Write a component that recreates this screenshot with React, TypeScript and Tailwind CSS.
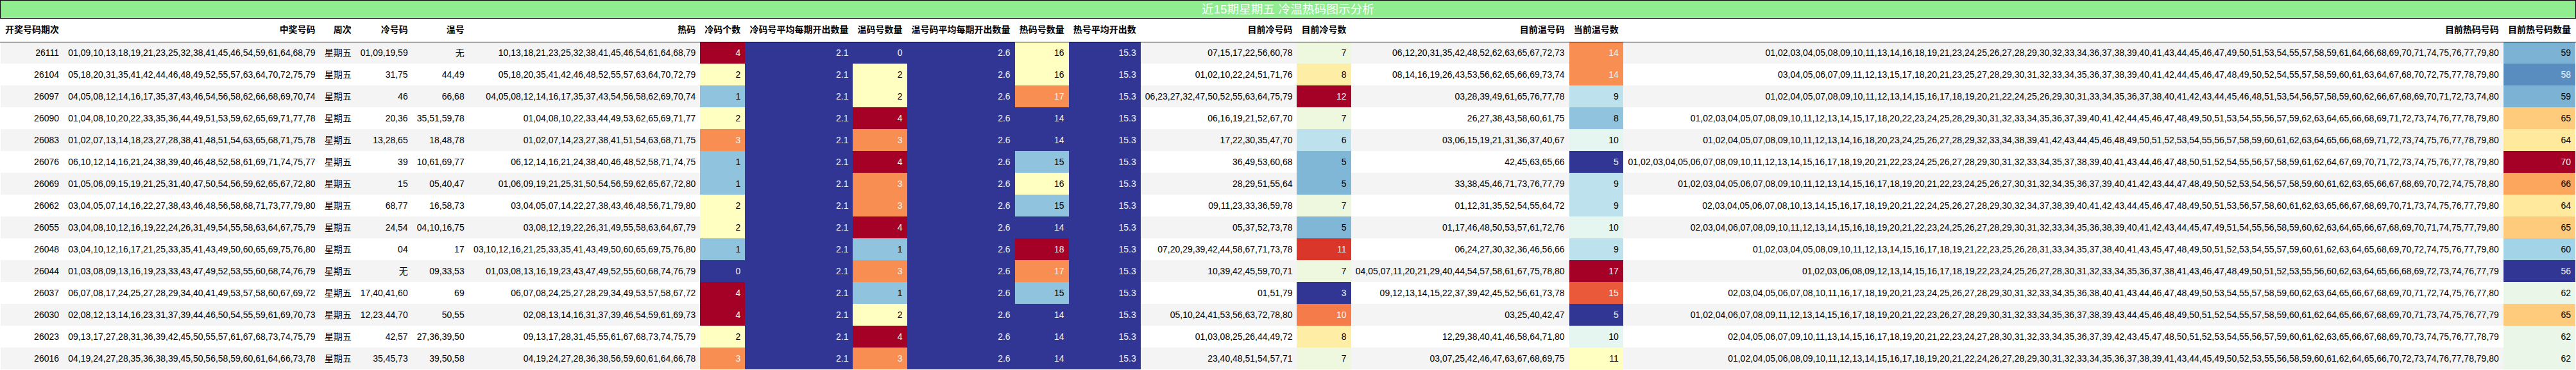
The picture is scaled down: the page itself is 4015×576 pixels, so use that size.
const HEADERS = [
  "开奖号码期次",
  "中奖号码",
  "周次",
  "冷号码",
  "温号",
  "热码",
  "冷码个数",
  "冷码号平均每期开出数量",
  "温码号数量",
  "温号码平均每期开出数量",
  "热码号数量",
  "热号平均开出数",
  "目前冷号码",
  "目前冷号数",
  "目前温号码",
  "当前温号数",
  "目前热码号码",
  "目前热号码数量",
];

// id, winning, cold, hot, current cold, current warm. Warm and current hot are derived.
const DRAWS: [string, string, string, string, string, string][] = [
  ["26111", "01,09,10,13,18,19,21,23,25,32,38,41,45,46,54,59,61,64,68,79", "01,09,19,59", "10,13,18,21,23,25,32,38,41,45,46,54,61,64,68,79", "07,15,17,22,56,60,78", "06,12,20,31,35,42,48,52,62,63,65,67,72,73"],
  ["26104", "05,18,20,31,35,41,42,44,46,48,49,52,55,57,63,64,70,72,75,79", "31,75", "05,18,20,35,41,42,46,48,52,55,57,63,64,70,72,79", "01,02,10,22,24,51,71,76", "08,14,16,19,26,43,53,56,62,65,66,69,73,74"],
  ["26097", "04,05,08,12,14,16,17,35,37,43,46,54,56,58,62,66,68,69,70,74", "46", "04,05,08,12,14,16,17,35,37,43,54,56,58,62,69,70,74", "06,23,27,32,47,50,52,55,63,64,75,79", "03,28,39,49,61,65,76,77,78"],
  ["26090", "01,04,08,10,20,22,33,35,36,44,49,51,53,59,62,65,69,71,77,78", "20,36", "01,04,08,10,22,33,44,49,53,62,65,69,71,77", "06,16,19,21,52,67,70", "26,27,38,43,58,60,61,75"],
  ["26083", "01,02,07,13,14,18,23,27,28,38,41,48,51,54,63,65,68,71,75,78", "13,28,65", "01,02,07,14,23,27,38,41,51,54,63,68,71,75", "17,22,30,35,47,70", "03,06,15,19,21,31,36,37,40,67"],
  ["26076", "06,10,12,14,16,21,24,38,39,40,46,48,52,58,61,69,71,74,75,77", "39", "06,12,14,16,21,24,38,40,46,48,52,58,71,74,75", "36,49,53,60,68", "42,45,63,65,66"],
  ["26069", "01,05,06,09,15,19,21,25,31,40,47,50,54,56,59,62,65,67,72,80", "15", "01,06,09,19,21,25,31,50,54,56,59,62,65,67,72,80", "28,29,51,55,64", "33,38,45,46,71,73,76,77,79"],
  ["26062", "03,04,05,07,14,16,22,27,38,43,46,48,56,58,68,71,73,77,79,80", "68,77", "03,04,05,07,14,22,27,38,43,46,48,56,71,79,80", "09,11,23,33,36,59,78", "01,12,31,35,52,54,55,64,72"],
  ["26055", "03,04,08,10,12,16,19,22,24,26,31,49,54,55,58,63,64,67,75,79", "24,54", "03,08,12,19,22,26,31,49,55,58,63,64,67,79", "05,37,52,73,78", "01,17,46,48,50,53,57,61,72,76"],
  ["26048", "03,04,10,12,16,17,21,25,33,35,41,43,49,50,60,65,69,75,76,80", "04", "03,10,12,16,21,25,33,35,41,43,49,50,60,65,69,75,76,80", "07,20,29,39,42,44,58,67,71,73,78", "06,24,27,30,32,36,46,56,66"],
  ["26044", "01,03,08,09,13,16,19,23,33,43,47,49,52,53,55,60,68,74,76,79", "", "01,03,08,13,16,19,23,43,47,49,52,55,60,68,74,76,79", "10,39,42,45,59,70,71", "04,05,07,11,20,21,29,40,44,54,57,58,61,67,75,78,80"],
  ["26037", "06,07,08,17,24,25,27,28,29,34,40,41,49,53,57,58,60,67,69,72", "17,40,41,60", "06,07,08,24,25,27,28,29,34,49,53,57,58,67,72", "01,51,79", "09,12,13,14,15,22,37,39,42,45,52,56,61,73,78"],
  ["26030", "02,08,12,13,14,16,23,31,37,39,44,46,50,54,55,59,61,69,70,73", "12,23,44,70", "02,08,13,14,16,31,37,39,46,54,59,61,69,73", "05,10,24,41,53,56,63,72,78,80", "03,25,40,42,47"],
  ["26023", "09,13,17,27,28,31,36,39,42,45,50,55,57,61,67,68,73,74,75,79", "42,57", "09,13,17,28,31,45,55,61,67,68,73,74,75,79", "01,03,08,25,26,44,49,72", "12,29,38,40,41,46,58,64,71,80"],
  ["26016", "04,19,24,27,28,35,36,38,39,45,50,56,58,59,60,61,64,66,73,78", "35,45,73", "04,19,24,27,28,36,38,56,59,60,61,64,66,78", "23,40,48,51,54,57,71", "03,07,25,42,46,47,63,67,68,69,75"],
];

const NAVY = "bg-[#313695] text-[#f1f1f1]";
const RED = "bg-[#a50026] text-[#f1f1f1]";

// heat scale per column, value -> colours
const SMALL_SCALE: Record<number, string> = {
  0: NAVY,
  1: "bg-[#90c3dd] text-black",
  2: "bg-[#feffc0] text-black",
  3: "bg-[#f98e52] text-[#f1f1f1]",
  4: RED,
};
const HOT_SCALE: Record<number, string> = {
  14: NAVY,
  15: "bg-[#90c3dd] text-black",
  16: "bg-[#feffc0] text-black",
  17: "bg-[#f98e52] text-[#f1f1f1]",
  18: RED,
};
const CUR_COLD_SCALE: Record<number, string> = {
  3: NAVY,
  5: "bg-[#80b7d6] text-black",
  6: "bg-[#bde2ee] text-black",
  7: "bg-[#eef8df] text-black",
  8: "bg-[#feeda5] text-black",
  10: "bg-[#f67b4a] text-[#f1f1f1]",
  11: "bg-[#da372a] text-[#f1f1f1]",
  12: RED,
};
const CUR_WARM_SCALE: Record<number, string> = {
  5: NAVY,
  8: "bg-[#90c3dd] text-black",
  9: "bg-[#bde2ee] text-black",
  10: "bg-[#e5f5ef] text-black",
  11: "bg-[#feffc0] text-black",
  14: "bg-[#f98e52] text-[#f1f1f1]",
  15: "bg-[#ea593a] text-[#f1f1f1]",
  17: RED,
};
const CUR_HOT_SCALE: Record<number, string> = {
  56: NAVY,
  58: "bg-[#598dc0] text-[#f1f1f1]",
  59: "bg-[#7cb3d4] text-black",
  60: "bg-[#a3d3e6] text-black",
  62: "bg-[#e9f6e8] text-black",
  64: "bg-[#fee99d] text-black",
  65: "bg-[#feca7c] text-black",
  66: "bg-[#fca55d] text-black",
  70: RED,
};

function split(list: string) {
  return list ? list.split(",") : [];
}

function orNone(list: string[]) {
  return list.length ? list.join(",") : "无";
}

function Cell({ children, tone = "" }: { children: React.ReactNode; tone?: string }) {
  return <td className={`h-[34px] p-0 px-[7px] text-right ${tone}`}>{children}</td>;
}

function Row({ draw }: { draw: (typeof DRAWS)[number] }) {
  const [id, winning, coldStr, hotStr, curColdStr, curWarmStr] = draw;
  const cold = split(coldStr);
  const hot = split(hotStr);
  const curCold = split(curColdStr);
  const curWarm = split(curWarmStr);
  const warm = split(winning).filter((n) => !cold.includes(n) && !hot.includes(n));
  const curHot = Array.from({ length: 80 }, (_, i) => String(i + 1).padStart(2, "0")).filter(
    (n) => !curCold.includes(n) && !curWarm.includes(n),
  );

  return (
    <tr className="odd:bg-[#f4f4f4] even:bg-white">
      <Cell>{id}</Cell>
      <Cell>{winning}</Cell>
      <Cell>星期五</Cell>
      <Cell>{orNone(cold)}</Cell>
      <Cell>{orNone(warm)}</Cell>
      <Cell>{hotStr}</Cell>
      <Cell tone={SMALL_SCALE[cold.length]}>{cold.length}</Cell>
      <Cell tone={NAVY}>2.1</Cell>
      <Cell tone={SMALL_SCALE[warm.length]}>{warm.length}</Cell>
      <Cell tone={NAVY}>2.6</Cell>
      <Cell tone={HOT_SCALE[hot.length]}>{hot.length}</Cell>
      <Cell tone={NAVY}>15.3</Cell>
      <Cell>{curColdStr}</Cell>
      <Cell tone={CUR_COLD_SCALE[curCold.length]}>{curCold.length}</Cell>
      <Cell>{curWarmStr}</Cell>
      <Cell tone={CUR_WARM_SCALE[curWarm.length]}>{curWarm.length}</Cell>
      <Cell>{curHot.join(",")}</Cell>
      <Cell tone={CUR_HOT_SCALE[curHot.length]}>{curHot.length}</Cell>
    </tr>
  );
}

export default function App() {
  return (
    <div className="min-h-screen bg-white font-['Liberation_Sans','Noto_Sans_CJK_SC',sans-serif] text-[14px] text-black">
      <table className="w-full border-x border-x-white whitespace-nowrap">
        <caption className="h-[29px] border border-black bg-[#90ee90] text-center text-[18.72px] leading-[27px] text-white">
          近15期星期五 冷温热码图示分析
        </caption>
        <thead>
          <tr className="border-b border-black">
            {HEADERS.map((title) => (
              <th className="h-[36px] p-0 px-[7px] text-right font-bold" key={title}>
                {title}
              </th>
            ))}
          </tr>
        </thead>
        <tbody>
          {DRAWS.map((draw) => (
            <Row draw={draw} key={draw[0]} />
          ))}
        </tbody>
      </table>
    </div>
  );
}
